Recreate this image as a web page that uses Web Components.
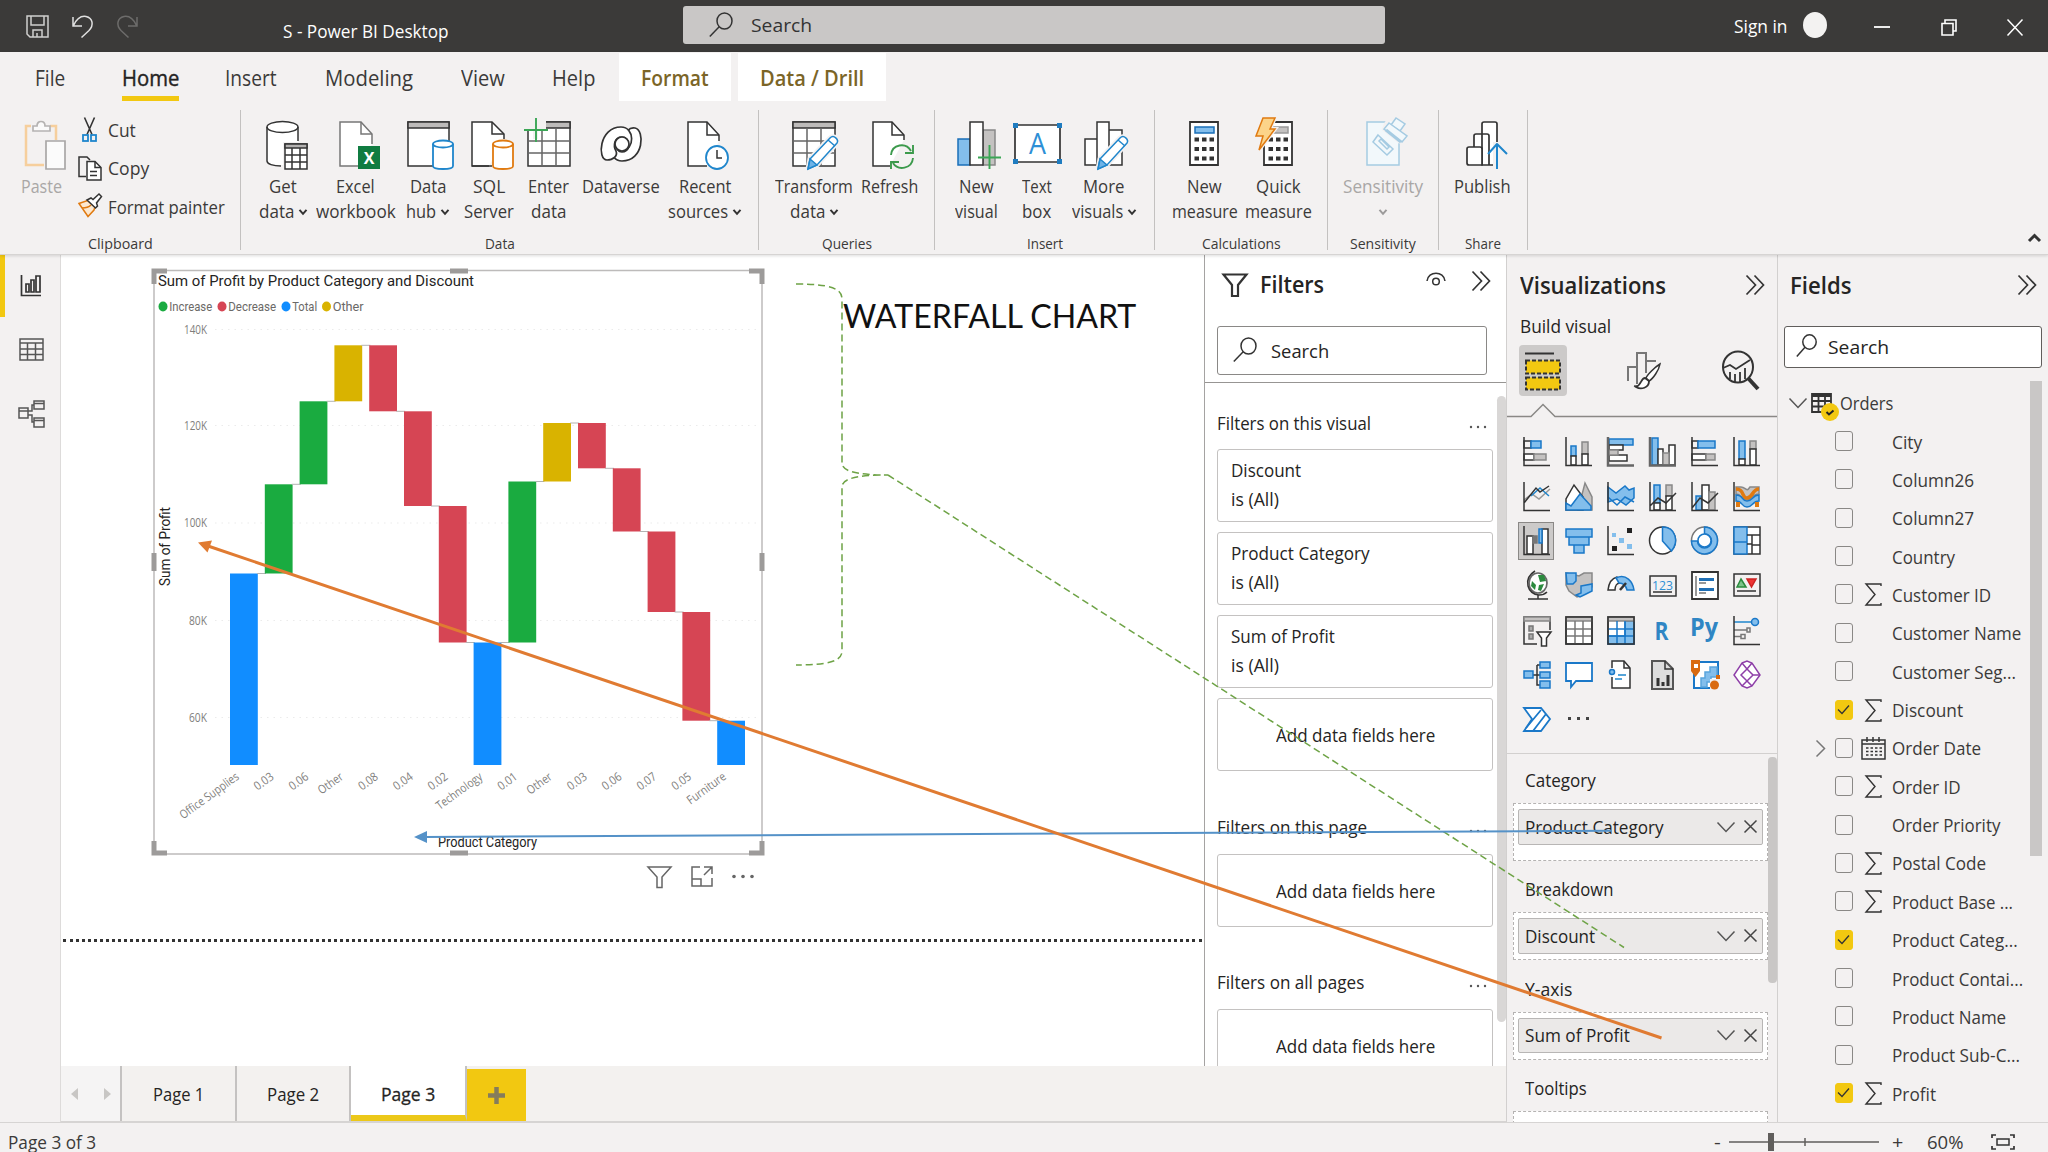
<!DOCTYPE html>
<html lang="en">
<head>
<meta charset="utf-8">
<title>S - Power BI Desktop</title>
<style>
    html, body { margin: 0; height: 100%; overflow: hidden; }
    body { font-family: "Open Sans", "Noto Sans", sans-serif; color: #252423; background: #f3f1f1; }
</style>
</head>
<body>
<pbi-app></pbi-app>

<script>
// name: [width, height, svg body]
const ICONS = {
    // title bar
    save: [23, 23, '<path d="M1 1h21v21H4l-3-3zM5 1v9h13V1M7 22v-7h9v7M11 22v-4" stroke="#d0cfce"/>'],
    undo: [21, 23, '<path d="M1 2v9h9M1.500 10.500C5 3 10 .8 14 1.500c7 1.500 8 9 3 14L9.500 22.500" stroke="#e0e0e0"/>'],
    redo: [21, 23, '<path d="M20 2v9h-9M19.500 10.500C16 3 11 .8 7 1.500c-7 1.500-8 9-3 14l7.500 7" stroke="#6d6c6b"/>'],
    search: [24, 25, '<ellipse cx="15.500" cy="9" rx="7.500" ry="8"/><path d="M10.200 14.800L.8 24.500"/>'],
    searchSmall: [21, 23, '<ellipse cx="13.500" cy="8" rx="6.700" ry="7.200"/><path d="M9 13.200L.8 22.500"/>'],
    minimize: [16, 16, '<path d="M0 8h16" stroke="#fff" stroke-width="1.800"/>'],
    restore: [16, 17, '<path d="M1 4.500h11V16H1zM4 4.500V1h11v11h-3" stroke="#fff" stroke-width="1.600"/>'],
    close: [16, 17, '<path d="M.5.5l15 16M15.500.5l-15 16" stroke="#fff"/>'],
    caretDown: [8, 6, '<path d="M.5.800L4 4.800 7.500.800" stroke-width="2"/>'],
    caretUp: [13, 9, '<path d="M1 8l5.500-5.500L12 8" stroke-width="3"/>'],
    // small clipboard commands
    cut: [24, 25, '<path d="M6.500.5l7.500 17M16.500.5L9 17.500" stroke-width="1.600"/><rect x="5" y="18" width="5" height="6" stroke="#1f86cc" stroke-width="1.800"/><rect x="13" y="18" width="5" height="6" stroke="#1f86cc" stroke-width="1.800"/>'],
    copy: [24, 25, '<path d="M8 20.500H1V1h8l3 3" /><path d="M9 5.500h8l6 6V24H9z" fill="#fff"/><path d="M17 5.500v6h6M12 15.500h7M12 19.500h7"/>'],
    painter: [24, 25, '<path d="M1 9.500l9 13 6-6.500 1-3-7.500-6.500z" stroke="#e07a10" fill="#fde8cf"/><path d="M4 14c4 0 7-1 9-3" stroke="#e07a10"/><path d="M9 6l4-2 2 1.500L21 0l2.500 2.500L18.500 9l1 3-2 2z" fill="#fff"/>'],
    // ribbon, 56x52, drawn around the middle
    paste: [56, 52, '<g stroke-width="1.700"><path d="M18 8h-5v39h18M37 8h6v14" stroke="#f6cf9d" stroke-width="2.500"/><path d="M20 13V8h4c0-6 8-6 8 0h5v5z" stroke="#b5b3b2" fill="#fafafa"/><path d="M33 23h19v28H33z" stroke="#a9a7a6" fill="#fbfbfb"/></g>'],
    getData: [56, 52, '<path d="M12 9h31v15H28v23c-9 0-16-1-16-4z" fill="#fff" stroke="none"/><ellipse cx="27.500" cy="9" rx="15.500" ry="5.500" fill="#fff"/><path d="M12 9v34c0 3 6 5 14 5M43 9v14"/><path d="M30 26h22v25H30z" fill="#fff"/><path d="M30 26h22v4H30z" fill="#b3b1b0" /><path d="M30 37h22M30 44h22M37 30v21M45 30v21"/>'],
    excel: [56, 52, '<path d="M30 48H12V4h21l11 12v10" fill="#fff" stroke="#777"/><path d="M33 4v12h11" stroke="#777"/><path d="M30 28h22v23H30z" fill="#107c41" stroke="none"/><text x="41" y="45.500" font-size="16" font-weight="700" fill="#fff" stroke="none" text-anchor="middle">X</text>'],
    dataHub: [56, 52, '<path d="M8 4h41v44H8z" fill="#fff"/><path d="M8 4h41v6H8z" fill="#bdbbba"/><path d="M33 26v22c0 4 20 4 20 0V26" fill="#fff" stroke="#1f86cc" stroke-width="1.800"/><ellipse cx="43" cy="26" rx="10" ry="3.500" fill="#fff" stroke="#1f86cc" stroke-width="1.800"/>'],
    sql: [56, 52, '<path d="M28 48H11V4h20l12 12v5" fill="#fff"/><path d="M31 4v12h12M11 48h20"/><path d="M32 26v22c0 4 20 4 20 0V26" fill="#fff" stroke="#e07a10" stroke-width="1.800"/><ellipse cx="42" cy="26" rx="10" ry="3.500" fill="#fff" stroke="#e07a10" stroke-width="1.800"/>'],
    enterData: [56, 52, '<path d="M7 4h42v44H7z" fill="#fff"/><path d="M7 4h42v6H7z" fill="#bdbbba"/><path d="M7 23h42M7 35h42M21 10v38M35 10v38" stroke="#666"/><path d="M3 0h22v12h-8v9H12v-9H3z" fill="#f3f1f1" stroke="none"/><path d="M15 0v24M3 12h24" stroke="#3aa655" stroke-width="1.900"/>'],
    dataverse: [56, 52, '<g stroke-width="1.700" fill="#fff"><path d="M42 10c10 2 9 33-13 33-15 0-12-24 0-23-8 0-8 14 0 14 7 0 9-9 6-15-3-5 1-10 7-9z"/><path d="M14 42C4 42 6 9 28 9c14 0 14 23 1 24 8-1 8-14 0-14-8 0-9 9-6 14 2 5-3 9-9 9z" /><circle cx="29" cy="26" r="7"/></g>'],
    recent: [56, 52, '<path d="M30 48H11V4h19l12 13v6" fill="#fff"/><path d="M30 4v13h12"/><ellipse cx="40" cy="39.500" rx="11" ry="11.500" fill="#fff" stroke="#1f86cc" stroke-width="1.800"/><path d="M40 32v8h5"/>'],
    transform: [56, 52, '<path d="M7 4h42v44H7z" fill="#fff"/><path d="M7 4h42v6H7z" fill="#bdbbba"/><path d="M7 23h42M7 35h42M21 10v38M35 10v38" stroke="#666"/><path d="M24 41L44 20c4-4 9 2 7 5L31 47l-9 4z" fill="#fff" stroke="#f3f1f1" stroke-width="5"/><path d="M24 41L44 20c4-4 9 2 7 5L31 47l-9 4z" fill="#fff" stroke="#1f86cc"/><path d="M24 41l7 6-9 4z" fill="#6fb3e6" stroke="#1f86cc"/><path d="M42 22l7 6" stroke="#1f86cc"/>'],
    refresh: [56, 52, '<path d="M28 48H11V4h19l12 13v5" fill="#fff"/><path d="M30 4v13h12"/><path d="M29 37c1-11 15-13 20-4M51 27v8h-8M51 40c-1 11-15 13-20 5M29 51v-7h8" stroke="#3c9a4c" stroke-width="1.900"/>'],
    newVisual: [56, 52, '<path d="M9 21h12v26H9z" fill="#83beec" stroke="#1a6fb8"/><path d="M34 12h12v35H34z" fill="#c4c2c1" stroke="#888"/><path d="M21 4h13v43H21z" fill="#fff"/><path d="M40.500 27v24M29 39.500h23" stroke="#3aa655" stroke-width="1.900"/>'],
    textBox: [56, 52, '<path d="M6 7h45v37H6z" fill="#fff" stroke-width="1.700"/><g fill="#1f7cc0" stroke="none"><path d="M4 5h5v5H4zM48 5h5v5h-5zM4 41h5v5H4zM48 41h5v5h-5z"/><text x="28.500" y="36" font-size="29" text-anchor="middle" textLength="17" lengthAdjust="spacingAndGlyphs" fill="#2e8fd6">A</text></g>'],
    moreVisuals: [56, 52, '<path d="M9 21h12v26H9zM33 12h13v35H33zM21 4h12v43H21z" fill="#fff"/><path d="M24 41L44 20c4-4 9 2 7 5L31 47l-9 4z" stroke="#f3f1f1" stroke-width="5"/><path d="M24 41L44 20c4-4 9 2 7 5L31 47l-9 4z" fill="#fff" stroke="#1f86cc"/><path d="M24 41l7 6-9 4z" fill="#6fb3e6" stroke="#1f86cc"/><path d="M42 22l7 6" stroke="#1f86cc"/>'],
    newMeasure: [56, 52, '<path d="M13 4h28v43H13z" fill="#fff" stroke-width="1.800"/><path d="M18 9h19v6H18z" fill="#83beec" stroke="#1a6fb8"/><path d="M17.500 21.500h20M17.500 31h20M17.500 40.500h20" stroke-width="4" stroke-dasharray="4.500 3"/>'],
    quickMeasure: [56, 52, '<path d="M13 4h28v43H13z" fill="#fff" stroke-width="1.800"/><path d="M20 9h17v6H18z" fill="#c4c2c1" stroke="#999"/><path d="M17.500 21.500h20M17.500 31h20M17.500 40.500h20" stroke-width="4" stroke-dasharray="4.500 3"/><path d="M12 0h12l-5 11h5L8 32l4-14H5z" fill="#fcd489" stroke="#f3f1f1" stroke-width="4"/><path d="M12 0h12l-5 11h5L8 32l4-14H5z" fill="#fcd489" stroke="#e07a10"/>'],
    sensitivity: [56, 52, '<g stroke="#a5cbe2" fill="#f2f8fb"><path d="M12 4h32v43H12z" /><path d="M23 17l15 14-6 6-14-13zM24 23l8 8 2-2-8-8z"/><path d="M31 6l4-6 5 3 3-3 7 5-4 6 5 5-7 7-15-12z" stroke="#f3f1f1" stroke-width="4"/><path d="M36 7l5-7 9 6-5 7z"/><path d="M34 5l18 13-5 6-18-13z"/><path d="M31 12l15 12" stroke-width="3"/></g>'],
    publish: [56, 52, '<g stroke-width="1.700" stroke-linejoin="round"><path d="M27 47V6q0-2 2-2h11q2 0 2 2v41zM19 46V18q0-2 2-2h11q2 0 2 2v29" fill="#fff"/><path d="M12 31q0-2 2-2h11q2 0 2 2v16H14q-2 0-2-2z" fill="#fff"/><path d="M38 24h8v24h-8z" fill="#f3f1f1" stroke="none"/><path d="M42 51V26M33 36l9-10 10 10" stroke="#1f86cc" stroke-width="2"/></g>'],
    // view rail
    report: [22, 22, '<path d="M1.500 0v20.500H21M6 17V9h3v8zM11 17V5h3v12zM16 17V1h4v16z" stroke-width="1.700"/>'],
    data: [25, 23, '<path d="M1 1h23v21H1zM1 5h23M1 11h23M1 16.500h23M8.500 5v17M16.500 5v17" stroke="#555"/>'],
    model: [27, 28, '<path d="M1 8h9v10H1zM16 1h10v8H16zM16 18h10v9H16zM10 11h4V5h2M10 15h4v7h2M1 11h9M16 3.500h10M16 20.500h10" stroke="#555"/>'],
    // panes
    funnel: [26, 24, '<path d="M1.500 1.500h23L16 12v11h-6V12z" stroke-width="2.200"/>'],
    eye: [20, 15, '<path d="M1 9C2-1.500 18-1.500 19 9"/><circle cx="10" cy="9.500" r="3.300"/>'],
    collapse: [20, 20, '<path d="M1.500.5l9 9.500-9 9.500M9.500.5l9 9.500-9 9.500" stroke-width="1.700"/>'],
    dots: [18, 4, '<g fill="#555" stroke="none"><circle cx="2" cy="2" r="1.200"/><circle cx="9" cy="2" r="1.200"/><circle cx="16" cy="2" r="1.200"/></g>'],
    chevron: [18, 10, '<path d="M.5.5L9 9.500 17.500.5" stroke="#555"/>'],
    chevronRight: [9, 17, '<path d="M.5.5l8 8-8 8" stroke="#777"/>'],
    remove: [13, 13, '<path d="M.5.5l12 12M12.500.5l-12 12" stroke="#444"/>'],
    funnelThin: [25, 22, '<path d="M1 1h23L15 11v10.500h-5V11z" stroke="#666"/>'],
    focus: [22, 21, '<path d="M9 1H1v19h20v-8M1 13h9v7M13 9l8-8M13 1h8v7" stroke="#666"/>'],
    dotsBig: [22, 5, '<g fill="#666" stroke="none"><circle cx="2" cy="2.500" r="1.800"/><circle cx="11" cy="2.500" r="1.800"/><circle cx="20" cy="2.500" r="1.800"/></g>'],
    build: [36, 38, '<path d="M0 1.500h29" stroke-width="2"/><path d="M1 8.500h34v13H1zM1 25.500h34v12H1z" fill="#f2c811" stroke-dasharray="4 2" stroke-width="2"/>'],
    format: [34, 38, '<g stroke="#777" stroke-width="2"><path d="M1 29V15h9M10 32V1h9v20M19 9h10M7 34h4"/></g><path d="M33 12C28 15 20 23 19 26l3 3c4-2 10-11 11-17z" fill="#fff"/><path d="M18 26c-4 0-4 8-9 9 5 3 13 1 13-6z" fill="#fff" stroke-width="1.800"/>'],
    analytics: [38, 40, '<ellipse cx="16" cy="16" rx="15" ry="15.500" stroke-width="2"/><path d="M1 17l7-3 6 4 14-9M8 21v7M13 23v8M18 21v10M23 17v11" stroke-width="1.800"/><path d="M26 27l10 11" stroke-width="4"/>'],
    sigma: [17, 23, '<path d="M16 3V1H1l9 10.500L1 22h15v-2" stroke-width="1.400"/>'],
    calendar: [25, 23, '<path d="M1 3h23v19H1zM6 0v5M12 0v5M18 0v5M1 7h23"/><path d="M5 11h16M5 14.500h16M5 18h16" stroke-dasharray="2.500 2"/>'],
    table: [21, 20, '<path d="M1 1h19v18H1zM1 3h19M1 8h19M1 13.500h19M7.500 3v16M14 3v16" stroke-width="1.800"/>'],
    fit: [24, 16, '<path d="M1 4V1h4M19 1h4v3M23 12v3h-4M5 15H1v-3" stroke-width="1.700"/><path d="M6 5h12v6H6z"/>'],
    plus: [17, 17, '<path d="M8.500 0v17M0 8.500h17" stroke="#857c5c" stroke-width="4.500"/>'],
    // visual types, 27x29
    stackedBar: [27, 29, '<path d="M1 4h7v7H1z"/><path d="M8 4h10v7H8z" class="b"/><path d="M1 17h10v6H1z" fill="#fff"/><path d="M11 17h12v6H11z" class="g"/><path d="M1 0v28.500h26"/>'],
    stackedColumn: [27, 29, '<path d="M6 9h5v10H6z" class="b"/><path d="M6 19h5v9H6z" fill="#fff"/><path d="M17 5h6v12h-6z" class="g"/><path d="M17 17h6v11h-6z" fill="#fff"/><path d="M1 0v28.500h26"/>'],
    clusteredBar: [27, 29, '<path d="M2 2h24v6H2z" class="b"/><path d="M2 8h14v5H2zM2 18h18v6H2z" fill="#fff"/><path d="M2 13h9v5H2z" class="g"/><path d="M1 0v28.500h26" stroke="#666" stroke-width="2.500"/>'],
    clusteredColumn: [27, 29, '<path d="M3 1h6v27H3z" class="b"/><path d="M9 12h5v16H9zM20 8h6v20h-6z" fill="#fff"/><path d="M14 16h6v12h-6z" class="g"/><path d="M1 0v28.500h26" stroke="#666" stroke-width="2.500"/>'],
    bar100: [27, 29, '<path d="M1 4h6v7H1z"/><path d="M7 4h17v7H7z" class="b"/><path d="M1 17h14v6H1z" fill="#fff"/><path d="M15 17h9v6h-9z" class="g"/><path d="M1 0v28.500h26"/>'],
    column100: [27, 29, '<path d="M6 4h6v18H6z" class="b"/><path d="M6 22h6v6H6z" fill="#fff"/><path d="M17 4h6v8h-6z" class="g"/><path d="M17 12h6v16h-6z" fill="#fff"/><path d="M1 0v28.500h26"/>'],
    line: [27, 29, '<path d="M1 18l8-6 7 5 11-10" stroke="#999"/><path d="M8 14l9-8 9 8" stroke="#1f86cc"/><path d="M1 21l12-15 4 4 9-6M1 0v28.500h26"/>'],
    area: [27, 29, '<path d="M13 28L20 1l7 14v13z" class="g"/><path d="M1 28V17L9 3l9 12v13z" fill="#fff"/><path d="M1 28v-7l5 3 9-12 11 12v4z" class="b"/>'],
    stackedArea: [27, 29, '<path d="M1 5l8 6 9-7 4 4 5-2v10l-8 7-9-6-9 3z" class="b"/><path d="M1 15l9 8 8-8 9 5" stroke="#1a78c8"/><path d="M1 0v28.500h26"/>'],
    lineStacked: [27, 29, '<path d="M5 3h6v18H5z" class="b"/><path d="M5 21h6v7H5z" fill="#fff"/><path d="M17 3h6v11h-6z" class="g"/><path d="M17 14h6v14h-6z" fill="#fff"/><path d="M1 24l8-8 8 5 10-10M1 0v28.500h26"/>'],
    lineClustered: [27, 29, '<path d="M5 14h6v14H5z" class="b"/><path d="M11 3h7v25h-7z" fill="#fff"/><path d="M18 10h6v18h-6z" class="g"/><path d="M1 26l8-10 8 5 10-10M1 0v28.500h26"/>'],
    ribbon: [27, 29, '<path d="M3 5h5c5 0 5 6 9 0h9v7c-8 0-6 6-12 6S9 12 3 12z" fill="#c4c2c1" stroke="#888"/><path d="M3 7c9 0 5 9 11 9s5-9 12-9" stroke="#e07a10" stroke-width="3.500"/><path d="M3 13c8 0 5 6 11 6s5-6 12-6v6c-7 0-6 6-12 6s-4-6-11-6z" class="b"/><path d="M3 20h4v5H3zM22 20h4v5h-4z" fill="#e07a10" stroke="none"/><path d="M1 0v28.500h26"/>'],
    waterfall: [27, 29, '<path d="M4 10h6v18H4zM19 3h6v25h-6z" fill="#fff"/><path d="M10 10h4v7h-4z" fill="#777" stroke="#777"/><path d="M16 3h3v14h-3z" class="b"/><path d="M1 0v28.500h26"/>'],
    funnelChart: [27, 29, '<path d="M1 3h26v8H1zM4 11h20v8H4zM9 19h10v8H9z" class="b"/>'],
    scatter: [27, 29, '<path d="M1 0v28.500h26"/><g stroke="none" fill="#83beec"><path d="M5 7h4v4H5zM12 12h5v5h-5zM20 18h5v5h-5z"/><path d="M20 2h5v5h-5zM5 20h5v5H5z" fill="#222"/></g>'],
    pie: [27, 29, '<ellipse cx="13.500" cy="14.500" rx="13" ry="13.500" fill="#fff"/><path d="M13.500 1v14l9 10C30 16 27 1 13.500 1z" class="b"/>'],
    donut: [27, 29, '<ellipse cx="13.500" cy="14.500" rx="13" ry="13.500" fill="#fff" stroke="#777"/><path d="M13.500 1a13 13.500 0 1 1-13 14h6a7 7 0 1 0 7-7z" class="b"/><circle cx="13.500" cy="14.500" r="6.500" fill="#fff" stroke="#1a78c8"/>'],
    treemap: [27, 29, '<path d="M1 1h26v27H1z" fill="#fff"/><path d="M1 1h13v15H1zM1 16h13v12H1z" class="b"/><path d="M14 9h13M19 9v19M14 18h5M19 19h8"/>'],
    map: [27, 29, '<ellipse cx="15" cy="12" rx="9" ry="10" fill="#fff" stroke="#666" stroke-width="1.700"/><path d="M15 4l6 0 2 6-6 1zM9 10l4 4-1 5-4-4zM16 14l5-1-3 7-3-1z" fill="#2b8a3e" stroke="none"/><path d="M12 0C-1 8 5 24 16 24c4 0 6-1 8-3M15 24v4M5 28h20"/>'],
    filledMap: [27, 29, '<path d="M1 2l9 2 4 1 5-3h8v14l-9 8-6 2-8-6-3-6z" class="g"/><path d="M1 2h10v8l-3 3H2z" class="b"/><path d="M16 15l11-2v7l-6 3-6 3-4-2 5-2z" class="b"/>'],
    gauge: [27, 29, '<path d="M1 19C2 10 6 7 10 6l3 6c-3 0-5 3-5 7z" fill="#fff"/><path d="M9 7c10-5 17 4 18 12h-7c-1-4-4-7-8-7z" class="b"/><path d="M13 19l6-7" stroke-width="2.500"/>'],
    card: [27, 29, '<path d="M1 5h26v20H1zM4 21h19"/><text x="13.500" y="18.500" font-size="13.500" text-anchor="middle" textLength="21" lengthAdjust="spacingAndGlyphs" fill="#2e8fd6" stroke="none">123</text>'],
    multiCard: [27, 29, '<path d="M1 1h26v27H1z" fill="#fff" stroke-width="1.800"/><path d="M5 5v20M8 12h7M8 22h7" stroke="#777"/><path d="M8 8.500h15M8 18.500h15" stroke="#1f6fb5" stroke-width="3"/>'],
    kpi: [27, 29, '<path d="M1 3h26v22H1zM4 20h19"/><path d="M8 8l5 8H4z" fill="#7cc38a" stroke="#2b8a3e"/><path d="M14 8h9l-4.500 8z" fill="#e33" stroke="#c22"/>'],
    slicer: [27, 29, '<path d="M14 28H1V1h26v13" /><path d="M1 1h26v4H1z" class="g"/><path d="M6 10h4v5H6zM6 18h4v5H6z" fill="#aaa" stroke="#777"/><path d="M14 16h14l-4.500 6v8h-5v-8z" fill="#fff"/>'],
    tableVis: [27, 29, '<path d="M1 1h26v27H1z" fill="#fff"/><path d="M1 1h26v4H1z" class="g"/><path d="M1 13h26M1 20h26M10 5v23M18 5v23" stroke="#777"/><path d="M1 1h26v27H1z"/>'],
    matrix: [27, 29, '<path d="M1 1h26v27H1z" fill="#fff"/><path d="M18 5h9v23H1v-8h17z" class="b"/><path d="M1 1h26v4H1z" class="g"/><path d="M1 13h26M1 20h26M10 5v23M18 5v23" stroke="#1a78c8"/><path d="M1 1h26v27H1z"/>'],
    rVis: [27, 29, '<text x="12.500" y="23.500" font-size="25" font-weight="700" text-anchor="middle" textLength="14" lengthAdjust="spacingAndGlyphs" fill="#2f86c4" stroke="none">R</text>'],
    pyVis: [27, 29, '<text x="13" y="20" font-size="25" font-weight="700" text-anchor="middle" textLength="28" lengthAdjust="spacingAndGlyphs" fill="#2f86c4" stroke="none">Py</text>'],
    influencers: [27, 29, '<path d="M1 6h17" stroke="#1f86cc"/><circle cx="22" cy="6" r="3.500" class="b"/><path d="M1 14h13M1 20.500h7" stroke="#777"/><path d="M14 12h3v4h-3zM8 18.500h4v4H8z" stroke="#777"/><path d="M1 0v28.500h26"/>'],
    decomposition: [27, 29, '<path d="M10 15h8M14 5v20h4M14 5h4"/><path d="M1 11h9v7H1zM17 2h10v6H17zM17 12h10v6H17zM17 21h10v7H17z" class="b"/>'],
    qna: [27, 29, '<path d="M1 3h26v18H11l-5 6v-6H1z" fill="#fff" stroke="#1a78c8" stroke-width="1.800"/>'],
    narrative: [27, 29, '<path d="M5 8V1h12l6 7v20H5V17" fill="#fff"/><path d="M17 1v7h6"/><path d="M11 15h8M8 19h7" stroke="#1f86cc"/><circle cx="5" cy="12" r="2.500" class="b"/>'],
    paginated: [27, 29, '<path d="M3 1h13l8 8v20H3z" fill="#ddd" stroke="#555" stroke-width="2"/><path d="M16 1v8h8"/><path d="M9 26v-8M14 26v-4M19 26V15" stroke-width="3"/>'],
    arcgis: [27, 29, '<path d="M3 2h24v26H3z" fill="#fff" stroke="#1a78c8" stroke-width="2"/><path d="M26 7h-7v5h-5v6h-4v9h6v-5h4v-5h6z" fill="#83beec" stroke="#5aa5dd"/><path d="M0 0h9v11l-4.500 6L0 11z" fill="#d96a10" stroke="none"/><path d="M3 4h4v4H3z" fill="#fff" stroke="none"/><path d="M19 19h10v10H19z" fill="#f3f1f1" stroke="none"/><circle cx="23.500" cy="25" r="4.500" fill="#d96a10" stroke="none"/><path d="M25 15h4v4h-4z" fill="#d96a10" stroke="none"/>'],
    powerApps: [27, 29, '<g stroke="#8e3fa8"><path d="M9 3l5-2 5 2 8 12-8 11-5 2-5-2-8-11z" fill="#fff"/><path d="M14 9l5-6M14 9l-5-6M14 9l-6 6 6 6 6-6zM14 21l-5 5M14 21l5 5M20 15l7 0"/></g>'],
    powerAutomate: [27, 29, '<g stroke="#1a78c8" fill="#fff" stroke-width="1.800"><path d="M1 3h17l9 11-9 12H1l8-12z"/><path d="M3 23L18 5M10 26L23 9"/></g>'],
    moreTypes: [27, 29, '<g fill="#444" stroke="none"><path d="M3 12h3v3H3zM12 12h3v3h-3zM21 12h3v3h-3z"/></g>']
};

class BaseElement extends HTMLElement {
    connectedCallback() {
        if (this.shadowRoot) return;
        this.attachShadow({ mode: 'open' });
        this.shadowRoot.innerHTML = this.render();
    }

    attr(name, fallback = '') {
        return this.hasAttribute(name) ? this.getAttribute(name) : fallback;
    }
}

class UiIcon extends BaseElement {
    render() {
        const [w, h, body] = ICONS[this.attr('name')];
        return `
            <style>
                :host { display: block; flex: none; width: ${w}px; height: ${h}px; }
                svg { display: block; overflow: visible; }
                .b { fill: #83beec; stroke: #1a78c8; }
                .g { fill: #c4c2c1; stroke: #888; }
            </style>
            <svg width="${w}" height="${h}" viewBox="0 0 ${w} ${h}" fill="none" stroke="#333" stroke-width="1.500">${body}</svg>
        `;
    }
}

// One line of text squeezed to the width given in "w"
class FitText extends BaseElement {
    connectedCallback() {
        super.connectedCallback();
        const span = this.shadowRoot.querySelector('span');
        const natural = span.offsetWidth;
        if (natural) span.style.transform = `scaleX(${this.attr('w') / natural})`;
    }

    render() {
        return `
            <style>
                :host { display: block; flex: none; width: ${this.attr('w')}px; white-space: nowrap; }
                span { display: inline-block; transform-origin: 0 50%; }
            </style>
            <span><slot></slot></span>
        `;
    }
}

class TitleBar extends BaseElement {
    render() {
        return `
            <style>
                :host { display: flex; align-items: flex-start; height: 52px; box-sizing: border-box; background: #3b3a39; color: #fff; font-size: 18px; line-height: 24px; }
                ui-icon { margin-top: 15px; }
                .search { display: flex; box-sizing: border-box; width: 702px; height: 38px; margin: 6px 0 0 234px; padding-left: 26px; background: #c9c7c6; border-radius: 3px; color: #333; font-size: 19px; line-height: 38px; }
                .search ui-icon { margin: 6px 18px 0 0; }
                .avatar { width: 24px; height: 26px; margin: 12px 47px 0 15px; border-radius: 50%; background: #f3f2f1; }
            </style>
            <ui-icon name="save" style="margin-left:26px"></ui-icon>
            <ui-icon name="undo" style="margin-left:23px"></ui-icon>
            <ui-icon name="redo" style="margin-left:24px"></ui-icon>
            <fit-text w="166" style="margin:18.500px 0 0 145px">S - Power BI Desktop</fit-text>
            <div class="search"><ui-icon name="search"></ui-icon><fit-text w="61">Search</fit-text></div>
            <fit-text w="54" style="margin:14px 0 0 349px">Sign in</fit-text>
            <div class="avatar"></div>
            <ui-icon name="minimize" style="margin-top:19px"></ui-icon>
            <ui-icon name="restore" style="margin:18.500px 0 0 51px"></ui-icon>
            <ui-icon name="close" style="margin:18.500px 0 0 50px"></ui-icon>
        `;
    }
}

class RibbonTabs extends BaseElement {
    render() {
        return `
            <style>
                :host { display: flex; height: 50px; padding-left: 34.500px; font-size: 21px; line-height: 52px; color: #3b3a39; }
                .active { color: #252423; -webkit-text-stroke: .4px #252423; box-sizing: border-box; height: 49px; border-bottom: 5px solid #f2c811; }
                .context { box-sizing: border-box; height: 48px; padding: 0 22px; margin-top: 1px; line-height: 50px; background: #fff; color: #7b6527; font-weight: 600; }
            </style>
            <fit-text w="30">File</fit-text>
            <fit-text w="57" class="active" style="margin-left:57px">Home</fit-text>
            <fit-text w="52" style="margin-left:46px">Insert</fit-text>
            <fit-text w="88" style="margin-left:48px">Modeling</fit-text>
            <fit-text w="44" style="margin-left:48px">View</fit-text>
            <fit-text w="43" style="margin-left:47px">Help</fit-text>
            <div class="context" style="margin-left:24px"><fit-text w="68">Format</fit-text></div>
            <div class="context" style="margin-left:7px"><fit-text w="104">Data / Drill</fit-text></div>
        `;
    }
}

class RibbonButton extends BaseElement {
    render() {
        const line = (n) => {
            const text = this.attr('line' + n);
            const label = text ? `<fit-text w="${this.attr('w' + n)}">${text}</fit-text>` : '';
            const caret = n == 2 && this.hasAttribute('menu') ? '<ui-icon name="caretDown"></ui-icon>' : '';
            return `<div class="line">${label}${caret}</div>`;
        };
        return `
            <style>
                :host { display: flex; flex: none; flex-direction: column; align-items: center; }
                :host([disabled]) { color: #a9a7a6; }
                :host([disabled]) .line ui-icon { opacity: .45; }
                .icon { height: 55.500px; }
                .line { display: flex; gap: 5px; align-items: center; height: 25px; font-size: 18px; line-height: 25px; }
                .line ui-icon { margin-top: 2px; }
            </style>
            <div class="icon"><ui-icon name="${this.attr('icon')}"></ui-icon></div>
            ${line(1)}${line(2)}
        `;
    }
}

class RibbonGroup extends BaseElement {
    render() {
        return `
            <style>
                :host { display: flex; flex: none; }
                .body { display: flex; flex: 1; flex-direction: column; align-items: center; }
                .items { display: flex; align-self: flex-start; height: 116px; padding-top: 16px; }
                .name { font-size: 14.500px; line-height: 20px; color: #3b3a39; }
                i { width: 1px; height: 140px; margin-top: 8px; background: #c3c1c0; }
            </style>
            <div class="body">
                <div class="items"><slot></slot></div>
                <fit-text class="name" w="${this.attr('w')}">${this.attr('name')}</fit-text>
            </div>
            <i></i>
        `;
    }
}

class RibbonBar extends BaseElement {
    render() {
        const button = (width, icon, line1, w1, line2 = '', w2 = 0, extra = '') =>
            `<ribbon-button style="width:${width}px" icon="${icon}" line1="${line1}" w1="${w1}" line2="${line2}" w2="${w2}" ${extra}></ribbon-button>`;
        return `
            <style>
                :host { display: block; position: relative; height: 202px; background: #f3f1f1; border-bottom: 1px solid #d6d4d3; box-shadow: 0 1px 3px #0002; color: #3b3a39; }
                .groups { display: flex; height: 152px; }
                .commands { display: flex; flex-direction: column; margin: -7.500px 0 0 -4px; font-size: 18px; line-height: 38.500px; }
                .commands div { display: flex; gap: 6px; align-items: center; height: 38.500px; }
                .fold { position: absolute; right: 7px; bottom: 12px; }
            </style>
            <ribbon-tabs></ribbon-tabs>
            <div class="groups">
                <ribbon-group name="Clipboard" w="65" style="width:241px">
                    ${button(82, 'paste', 'Paste', 41, '', 0, 'disabled')}
                    <div class="commands">
                        <div><ui-icon name="cut"></ui-icon><fit-text w="28">Cut</fit-text></div>
                        <div><ui-icon name="copy"></ui-icon><fit-text w="41">Copy</fit-text></div>
                        <div><ui-icon name="painter"></ui-icon><fit-text w="117">Format painter</fit-text></div>
                    </div>
                </ribbon-group>
                <ribbon-group name="Data" w="30" style="width:518px">
                    ${button(83, 'getData', 'Get', 28, 'data', 35, 'menu')}
                    ${button(63, 'excel', 'Excel', 39, 'workbook', 80)}
                    ${button(81, 'dataHub', 'Data', 36, 'hub', 30, 'menu')}
                    ${button(41, 'sql', 'SQL', 32, 'Server', 50)}
                    ${button(79, 'enterData', 'Enter', 41, 'data', 35)}
                    ${button(65, 'dataverse', 'Dataverse', 78)}
                    ${button(103, 'recent', 'Recent', 52, 'sources', 60, 'menu')}
                </ribbon-group>
                <ribbon-group name="Queries" w="50" style="width:176px">
                    ${button(109, 'transform', 'Transform', 78, 'data', 35, 'menu')}
                    ${button(43, 'refresh', 'Refresh', 57)}
                </ribbon-group>
                <ribbon-group name="Insert" w="36" style="width:220px">
                    ${button(83, 'newVisual', 'New', 35, 'visual', 43)}
                    ${button(37, 'textBox', 'Text', 30, 'box', 29)}
                    ${button(97, 'moreVisuals', 'More', 41, 'visuals', 51, 'menu')}
                </ribbon-group>
                <ribbon-group name="Calculations" w="79" style="width:173px">
                    ${button(99, 'newMeasure', 'New', 35, 'measure', 66)}
                    ${button(49, 'quickMeasure', 'Quick', 45, 'measure', 67)}
                </ribbon-group>
                <ribbon-group name="Sensitivity" w="66" style="width:111px">
                    ${button(109, 'sensitivity', 'Sensitivity', 80, '', 0, 'menu disabled')}
                </ribbon-group>
                <ribbon-group name="Share" w="36" style="width:89px">
                    ${button(87, 'publish', 'Publish', 57)}
                </ribbon-group>
            </div>
            <ui-icon class="fold" name="caretUp"></ui-icon>
        `;
    }
}

class ViewRail extends BaseElement {
    render() {
        return `
            <style>
                :host { display: flex; flex-direction: column; box-sizing: border-box; border-right: 1px solid #dddbda; background: #f3f1f1; }
                div { display: flex; box-sizing: border-box; height: 62px; align-items: center; justify-content: center; padding-left: 2px; }
                .on { border-left: 5px solid #f2c811; padding: 0 3px 0 0; }
                div + div { margin-top: 1px; }
                div + div + div { margin-top: 3px; }
            </style>
            <div class="on"><ui-icon name="report"></ui-icon></div>
            <div><ui-icon name="data"></ui-icon></div>
            <div><ui-icon name="model"></ui-icon></div>
        `;
    }
}

class WaterfallChart extends BaseElement {
    render() {
        const colors = { g: '#1aab40', r: '#d64554', b: '#118dff', y: '#d9b300' };
        // colour, top, bottom, axis label, label length
        const bars = [
            ['b', 573.5, 765, 'Office Supplies', 70], ['g', 484.3, 573.5, '0.03', 21], ['g', 401.3, 484.3, '0.06', 21],
            ['y', 345.3, 401.3, 'Other', 28], ['r', 345.3, 411.3, '0.08', 21], ['r', 411.3, 506, '0.04', 21],
            ['r', 506, 642.5, '0.02', 21], ['b', 642.5, 765, 'Technology', 54], ['g', 481.5, 642.5, '0.01', 21],
            ['y', 423, 481.5, 'Other', 28], ['r', 423, 468.3, '0.03', 21], ['r', 468.3, 531.5, '0.06', 21],
            ['r', 531.5, 612, '0.07', 21], ['r', 612, 720.7, '0.05', 21], ['b', 720.7, 765, 'Furniture', 45]
        ];
        const ends = [573.5, 484.3, 401.3, 345.3, 411.3, 506, 642.5, 642.5, 481.5, 423, 468.3, 531.5, 612, 720.7];
        const text = (x, y, w, s, more = '') =>
            `<text x="${x}" y="${y}" textLength="${w}" lengthAdjust="spacingAndGlyphs" ${more}>${s}</text>`;
        const body = bars.map(([c, top, bottom, label, len], i) => {
            const x = 230 + i * 34.8;
            const lx = x + 9, ly = 779;
            const link = i < 14 ? `<path d="M${x + 27} ${ends[i]}h9" stroke="#b3b3b3"/>` : '';
            return `<rect x="${x}" y="${top}" width="27.800" height="${bottom - top}" fill="${colors[c]}"/>${link}`
                + text(lx - len + 1, ly, len, label, `transform="rotate(-36 ${lx} ${ly})" class="axis"`);
        }).join('');
        const grid = [['140K', 329.5], ['120K', 425.5], ['100K', 523], ['80K', 620.5], ['60K', 717.5]].map(([s, y]) => {
            const w = s.length > 3 ? 23 : 18;
            return `<path d="M215 ${y}H756" stroke="#ebebeb" stroke-dasharray="1.500 5"/>` + text(207 - w, y + 4.2, w, s, 'class="axis"');
        }).join('');
        const legend = [['g', 163, 'Increase', 43], ['r', 222, 'Decrease', 48], ['b', 286, 'Total', 25], ['y', 326.5, 'Other', 31]].map(([c, x, s, w]) =>
            `<ellipse cx="${x}" cy="306.500" rx="4.500" ry="5" fill="${colors[c]}"/>` + text(x + 6.2, 311.2, w, s, 'class="legend"')).join('');
        return `
            <style>
                :host { display: block; }
                svg { display: block; overflow: visible; font-family: Roboto, "Open Sans", sans-serif; }
                .title { font-size: 15px; fill: #252423; }
                .legend { font-size: 13px; fill: #6b6967; }
                .axis { font-size: 12px; fill: #807e7c; font-family: "Open Sans", sans-serif; }
            </style>
            <svg width="614" height="590" viewBox="151 267 614 590" fill="none">
                <path d="M154 270.500H762V854H154z" stroke="#bdbbba" stroke-width="1.500"/>
                ${grid}
                ${body}
                ${text(158, 286, 316, 'Sum of Profit by Product Category and Discount', 'class="title"')}
                ${legend}
                ${text(438, 847, 99, 'Product Category', 'class="title"')}
                ${text(170, 586, 79, 'Sum of Profit', 'class="title" transform="rotate(-90 170 586)"')}
                <g stroke="#9d9b9a" stroke-width="5">
                    <path d="M154 284v-13h13M749 271h13v13M154 841v12h13M749 853h13v-12M450 271h18M450 853h18"/>
                    <path d="M154 553v18M762 553v18"/>
                </g>
            </svg>
        `;
    }
}

class ReportCanvas extends BaseElement {
    render() {
        return `
            <style>
                :host { display: block; position: relative; overflow: hidden; background: #fff; }
                waterfall-chart { position: absolute; left: 90px; top: 12px; }
                .tools { position: absolute; left: 586px; top: 610.500px; display: flex; align-items: center; gap: 19px; }
                .heading { position: absolute; left: 782px; top: 38.500px; font: 32px/44px Lato, sans-serif; color: #111; }
                .edge { position: absolute; left: 2px; right: 2px; top: 684px; border-top: 3px dotted #333; }
            </style>
            <waterfall-chart></waterfall-chart>
            <div class="tools"><ui-icon name="funnelThin"></ui-icon><ui-icon name="focus"></ui-icon><ui-icon name="dotsBig"></ui-icon></div>
            <fit-text class="heading" w="293">WATERFALL CHART</fit-text>
            <div class="edge"></div>
        `;
    }
}

class PageTabs extends BaseElement {
    render() {
        return `
            <style>
                :host { display: flex; height: 56px; box-sizing: border-box; background: #f3f1ef; border-bottom: 1px solid #d6d4d3; font-size: 18.500px; line-height: 55px; }
                div { display: flex; justify-content: center; box-sizing: border-box; height: 55px; border-right: 2px solid #c4c2c1; }
                .nav { width: 61px; align-items: center; gap: 26px; background: #f5f4f4; }
                .nav i { border: 6px solid transparent; border-width: 6px 7px 6px 0; border-right-color: #c8c6c4; }
                .nav i + i { border-width: 6px 0 6px 7px; border-left-color: #c8c6c4; }
                .on { background: #fff; border-bottom: 6px solid #ecc819; -webkit-text-stroke: .3px #252423; }
                .add { width: 59px; height: 52px; margin-top: 3px; border: 0; background: #f2c811; align-items: center; }
            </style>
            <div class="nav"><i></i><i></i></div>
            <div style="width:115px"><fit-text w="51">Page 1</fit-text></div>
            <div style="width:114px"><fit-text w="52">Page 2</fit-text></div>
            <div class="on" style="width:116px"><fit-text w="54">Page 3</fit-text></div>
            <div class="add"><ui-icon name="plus"></ui-icon></div>
        `;
    }
}

class FilterCard extends BaseElement {
    render() {
        const field = this.attr('field');
        return `
            <style>
                :host { display: block; flex: none; box-sizing: border-box; width: 276px; height: 73px; border: 1.500px solid #c4c2c1; border-radius: 3px; font-size: 18px; background: #fff; }
                .set { padding: 6.500px 0 0 13px; line-height: 29px; }
                .empty { display: flex; justify-content: center; line-height: 73px; }
            </style>
            ${field
                ? `<div class="set"><fit-text w="${this.attr('w')}">${field}</fit-text><fit-text w="48">is (All)</fit-text></div>`
                : '<div class="empty"><fit-text w="159">Add data fields here</fit-text></div>'}
        `;
    }
}

class FiltersPane extends BaseElement {
    render() {
        const section = (title, w, top, bottom) =>
            `<div class="title" style="margin:${top}px 0 ${bottom}px"><fit-text w="${w}">${title}</fit-text><ui-icon name="dots"></ui-icon></div>`;
        return `
            <style>
                :host { display: flex; flex-direction: column; position: relative; box-sizing: border-box; overflow: hidden; background: #fff; border-left: 1.500px solid #a5a3a2; color: #252423; }
                header { display: flex; align-items: center; height: 59px; padding-left: 17px; font-size: 22.500px; font-weight: 600; }
                .search { display: flex; align-items: center; box-sizing: border-box; width: 270px; height: 49px; margin: 12px 0 7px 12px; padding-left: 15px; gap: 14px; border: 1.500px solid #8a8886; border-radius: 3px; font-size: 19px; line-height: 46px; }
                .search ui-icon { margin-top: -3px; }
                .list { display: flex; flex-direction: column; flex: 1; min-height: 0; border-top: 1.500px solid #979593; padding-left: 12px; }
                .cards { display: flex; flex-direction: column; gap: 10.200px; }
                .title { display: flex; align-items: center; justify-content: space-between; flex: none; width: 270px; height: 30px; font-size: 18px; line-height: 30px; }
                .title ui-icon { margin-top: 8px; }
                .bar { position: absolute; right: 0; top: 141px; width: 9px; height: 626px; border-radius: 5px; background: #d9d7d6; }
            </style>
            <header>
                <ui-icon name="funnel"></ui-icon>
                <fit-text w="64" style="margin-left:12px">Filters</fit-text>
                <ui-icon name="eye" style="margin:-10px 0 0 102px"></ui-icon>
                <ui-icon name="collapse" style="margin:-7px 0 0 25px"></ui-icon>
            </header>
            <div class="search"><ui-icon name="search"></ui-icon><fit-text w="58">Search</fit-text></div>
            <div class="list">
                ${section('Filters on this visual', 154, 24.5, 11)}
                <div class="cards">
                    <filter-card field="Discount" w="70"></filter-card>
                    <filter-card field="Product Category" w="139"></filter-card>
                    <filter-card field="Sum of Profit" w="104"></filter-card>
                    <filter-card></filter-card>
                </div>
                ${section('Filters on this page', 150, 40.5, 12)}
                <filter-card></filter-card>
                ${section('Filters on all pages', 147, 40.5, 11.5)}
                <filter-card></filter-card>
            </div>
            <div class="bar"></div>
        `;
    }
}

class FieldWell extends BaseElement {
    render() {
        const field = this.attr('field');
        return `
            <style>
                :host { display: block; flex: none; font-size: 18px; }
                .name { height: 30px; margin: 0 0 8px 12px; line-height: 30px; }
                .drop { box-sizing: border-box; width: 255px; min-height: 48px; padding: 5px 4px 0; border: 1.500px dashed #b5b3b2; background: #fff; }
                :host([tall]) .drop { height: 57.500px; }
                .pill { display: flex; align-items: center; box-sizing: border-box; height: 35.500px; padding: 0 5px 0 6px; background: #ebe9e8; border: 1.500px solid #b8b6b5; border-radius: 2px; }
                .pill fit-text { margin-right: auto; }
            </style>
            <div class="name"><fit-text w="${this.attr('wn')}">${this.attr('name')}</fit-text></div>
            <div class="drop">${field ? `<div class="pill">
                <fit-text w="${this.attr('wf')}">${field}</fit-text>
                <ui-icon name="chevron"></ui-icon><ui-icon name="remove" style="margin-left:9px"></ui-icon>
            </div>` : ''}</div>
        `;
    }
}

class VisualizationsPane extends BaseElement {
    render() {
        const types = ['stackedBar', 'stackedColumn', 'clusteredBar', 'clusteredColumn', 'bar100', 'column100',
            'line', 'area', 'stackedArea', 'lineStacked', 'lineClustered', 'ribbon',
            'waterfall', 'funnelChart', 'scatter', 'pie', 'donut', 'treemap',
            'map', 'filledMap', 'gauge', 'card', 'multiCard', 'kpi',
            'slicer', 'tableVis', 'matrix', 'rVis', 'pyVis', 'influencers',
            'decomposition', 'qna', 'narrative', 'paginated', 'arcgis', 'powerApps',
            'powerAutomate', 'moreTypes'];
        return `
            <style>
                :host { display: flex; flex-direction: column; position: relative; box-sizing: border-box; overflow: hidden; border-left: 1px solid #d2d0cf; background: #f3f1f1; }
                header { display: flex; align-items: center; justify-content: space-between; height: 60px; flex: none; padding: 0 12px 0 13px; font-size: 22.500px; font-weight: 600; }
                .sub { padding-left: 13px; height: 30px; flex: none; font-size: 18px; line-height: 23px; }
                .modes { display: flex; align-items: center; flex: none; height: 51px; padding-left: 12px; }
                .modes div { display: flex; align-items: center; justify-content: center; width: 48px; height: 51px; border-radius: 4px; background: #cccac9; }
                .notch { display: block; flex: none; margin-top: 7px; }
                .types { display: grid; flex: none; grid-template-columns: repeat(6, 42px); grid-auto-rows: 44.700px; margin: 11px 0 0 8px; height: 324px; }
                .types span { display: flex; align-items: center; justify-content: center; }
                .types .on { box-sizing: border-box; width: 36px; height: 38px; align-self: center; justify-self: center; background: #cccac9; border: 1.500px solid #8a8886; }
                .wells { display: flex; flex-direction: column; gap: 13.500px; flex: 1; min-height: 0; border-top: 1px solid #d2d0cf; padding: 11px 0 0 6px; }
                .bar { position: absolute; right: 0; top: 502px; width: 9px; height: 226px; border-radius: 4px; background: #c9c7c6; }
            </style>
            <header><fit-text w="146">Visualizations</fit-text><ui-icon name="collapse"></ui-icon></header>
            <div class="sub"><fit-text w="91">Build visual</fit-text></div>
            <div class="modes">
                <div><ui-icon name="build"></ui-icon></div>
                <ui-icon name="format" style="margin-left:60px"></ui-icon>
                <ui-icon name="analytics" style="margin-left:61px"></ui-icon>
            </div>
            <svg class="notch" width="270" height="15" fill="none" stroke="#8a8886" stroke-width="1.500"><path d="M0 13.500h24L36 1.500l12 12h222"/></svg>
            <div class="types">${types.map(t => `<span class="${t == 'waterfall' ? 'on' : ''}"><ui-icon name="${t}"></ui-icon></span>`).join('')}</div>
            <div class="wells">
                <field-well tall name="Category" wn="71" field="Product Category" wf="139"></field-well>
                <field-well name="Breakdown" wn="88" field="Discount" wf="70"></field-well>
                <field-well name="Y-axis" wn="47" field="Sum of Profit" wf="105"></field-well>
                <field-well name="Tooltips" wn="62"></field-well>
            </div>
            <div class="bar"></div>
        `;
    }
}

class FieldRow extends BaseElement {
    render() {
        const icon = this.attr('icon');
        return `
            <style>
                :host { display: flex; align-items: center; height: 38.360px; font-size: 18px; line-height: 38px; color: #3b3a39; }
                .expand { width: 9px; margin: 0 6px 0 38px; }
                .box { box-sizing: border-box; width: 18px; height: 20px; margin: -1px 8px 0 4px; border: 1.500px solid #8a8886; border-radius: 3px; }
                :host([checked]) .box { background: #f2c811; border-color: #f2c811; }
                .box svg { display: none; }
                :host([checked]) .box svg { display: block; }
                .kind { display: flex; justify-content: center; width: 25px; margin-right: 6px; }
            </style>
            <div class="expand">${this.hasAttribute('expand') ? '<ui-icon name="chevronRight"></ui-icon>' : ''}</div>
            <div class="box"><svg width="15" height="17" fill="none" stroke="#333" stroke-width="1.300"><path d="M2 8.500l4 4 7-8"/></svg></div>
            <div class="kind">${icon ? `<ui-icon name="${icon}"></ui-icon>` : ''}</div>
            <fit-text w="${this.attr('w')}"><slot></slot></fit-text>
        `;
    }
}

class FieldsPane extends BaseElement {
    render() {
        const rows = [
            ['City', 30], ['Column26', 82], ['Column27', 82], ['Country', 63], ['Customer ID', 99, 'icon="sigma"'],
            ['Customer Name', 129], ['Customer Seg...', 124], ['Discount', 71, 'icon="sigma" checked'],
            ['Order Date', 89, 'icon="calendar" expand'], ['Order ID', 69, 'icon="sigma"'], ['Order Priority', 108],
            ['Postal Code', 94, 'icon="sigma"'], ['Product Base ...', 121, 'icon="sigma"'], ['Product Categ...', 126, 'checked'],
            ['Product Contai...', 131], ['Product Name', 114], ['Product Sub-C...', 128], ['Profit', 44, 'icon="sigma" checked']
        ];
        return `
            <style>
                :host { display: flex; flex-direction: column; position: relative; box-sizing: border-box; overflow: hidden; border-left: 1px solid #d2d0cf; background: #f3f1f1; }
                header { display: flex; align-items: center; justify-content: space-between; height: 60px; padding: 0 11px 0 12px; font-size: 22.500px; font-weight: 600; }
                .search { display: flex; align-items: center; box-sizing: border-box; width: 258px; height: 42px; margin: 11px 0 16px 6px; padding-left: 11px; gap: 11px; border: 1.500px solid #605e5c; border-radius: 3px; background: #fff; font-size: 19px; line-height: 41px; }
                .search ui-icon { margin-top: -3px; }
                .table { display: flex; align-items: center; height: 38.360px; padding-left: 11px; font-size: 18px; color: #3b3a39; }
                .kind { position: relative; margin: 0 8px 0 4px; }
                .badge { position: absolute; left: 10px; top: 10px; width: 18px; height: 18px; border-radius: 50%; background: #f2c811; }
                .bar { position: absolute; right: 6px; top: 126px; width: 12px; height: 475px; background: #c9c7c6; }
            </style>
            <header><fit-text w="61">Fields</fit-text><ui-icon name="collapse"></ui-icon></header>
            <div class="search"><ui-icon name="searchSmall"></ui-icon><fit-text w="61">Search</fit-text></div>
            <div class="table">
                <ui-icon name="chevron"></ui-icon>
                <div class="kind"><ui-icon name="table"></ui-icon><svg class="badge" viewBox="0 0 18 18" fill="none" stroke="#222" stroke-width="2"><path d="M5.500 9l2.500 2.500 4.500-4"/></svg></div>
                <fit-text w="53">Orders</fit-text>
            </div>
            ${rows.map(([name, w, more = '']) => `<field-row w="${w}" ${more}>${name}</field-row>`).join('')}
            <div class="bar"></div>
        `;
    }
}

class StatusBar extends BaseElement {
    render() {
        return `
            <style>
                :host { display: flex; align-items: center; box-sizing: border-box; height: 30px; padding: 8px 33px 0 8px; background: #f3f1f1; font-size: 18px; line-height: 20px; color: #3b3a39; }
                svg { margin: 0 12px 0 7px; }
            </style>
            <fit-text w="88" style="margin-right:auto">Page 3 of 3</fit-text>
            <fit-text w="7">-</fit-text>
            <svg width="152" height="20" stroke="#605e5c" stroke-width="1.500"><path d="M1 10h150M77 6v8"/><path d="M43 1v18" stroke-width="6"/></svg>
            <fit-text w="11" style="margin-right:24px">+</fit-text>
            <fit-text w="36" style="margin-right:28px">60%</fit-text>
            <ui-icon name="fit"></ui-icon>
        `;
    }
}

// Arrows and bracket drawn over the whole window
class CalloutLayer extends BaseElement {
    render() {
        return `
            <style>
                :host { position: absolute; inset: 0; pointer-events: none; }
            </style>
            <svg width="2048" height="1152" fill="none">
                <g stroke="#6ea346" stroke-width="1.500" stroke-dasharray="7 4">
                    <path d="M796 284C829 284 842 288 842 299V463C842 471 855 475 888 475C855 475 842 479 842 487V651C842 661 829 665 796 665"/>
                    <path d="M888 475L1624 947.500"/>
                </g>
                <path d="M1611 830.700L424 837" stroke="#5592c8" stroke-width="2"/>
                <path d="M414 837l13-6v12z" fill="#5592c8"/>
                <path d="M1661.500 1038L208 546" stroke="#e07b32" stroke-width="3"/>
                <path d="M198 542.500l14-2-4.500 12z" fill="#e07b32"/>
            </svg>
        `;
    }
}

class PbiApp extends BaseElement {
    render() {
        return `
            <style>
                :host { display: flex; flex-direction: column; position: relative; width: 2048px; height: 1152px; overflow: hidden; }
                main { display: grid; grid-template-columns: 61px 1445px 271px 271px; flex: 1; min-height: 0; }
                .center { display: flex; flex-direction: column; min-height: 0; }
                .work { display: grid; grid-template-columns: 1143px 302px; grid-template-rows: 811px; height: 811px; }
                ribbon-bar { z-index: 1; }
                status-bar { border-top: 1px solid #d6d4d3; }
            </style>
            <title-bar></title-bar>
            <ribbon-bar></ribbon-bar>
            <main>
                <view-rail></view-rail>
                <div class="center">
                    <div class="work"><report-canvas></report-canvas><filters-pane></filters-pane></div>
                    <page-tabs></page-tabs>
                </div>
                <visualizations-pane></visualizations-pane>
                <fields-pane></fields-pane>
            </main>
            <status-bar></status-bar>
            <callout-layer></callout-layer>
        `;
    }
}

customElements.define('pbi-app', PbiApp);
customElements.define('title-bar', TitleBar);
customElements.define('ribbon-bar', RibbonBar);
customElements.define('ribbon-tabs', RibbonTabs);
customElements.define('ribbon-group', RibbonGroup);
customElements.define('ribbon-button', RibbonButton);
customElements.define('view-rail', ViewRail);
customElements.define('report-canvas', ReportCanvas);
customElements.define('waterfall-chart', WaterfallChart);
customElements.define('page-tabs', PageTabs);
customElements.define('filters-pane', FiltersPane);
customElements.define('filter-card', FilterCard);
customElements.define('visualizations-pane', VisualizationsPane);
customElements.define('field-well', FieldWell);
customElements.define('fields-pane', FieldsPane);
customElements.define('field-row', FieldRow);
customElements.define('status-bar', StatusBar);
customElements.define('callout-layer', CalloutLayer);
customElements.define('ui-icon', UiIcon);
// last, so that the widths are measured in the finished layout
customElements.define('fit-text', FitText);
</script>
</body>
</html>
